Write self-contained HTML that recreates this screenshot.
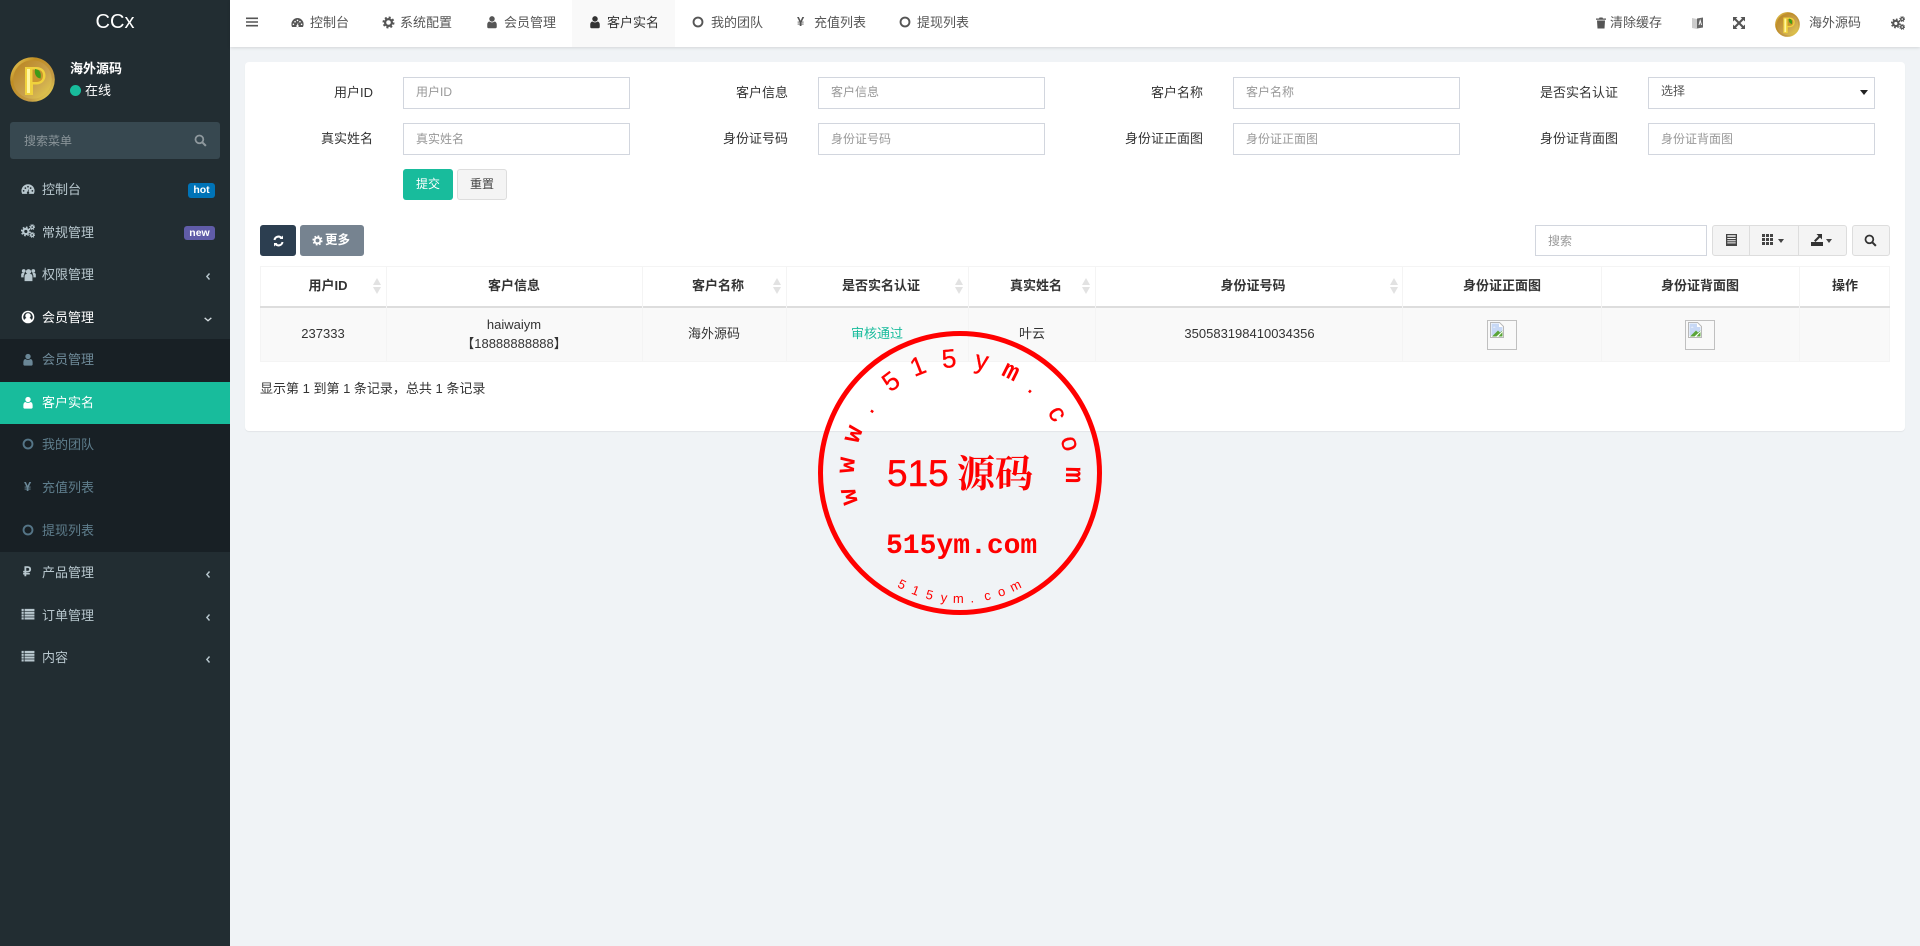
<!DOCTYPE html>
<html lang="zh-CN"><head><meta charset="utf-8"><title>客户实名</title>
<style>
*{box-sizing:border-box}
html,body{margin:0;padding:0;width:1920px;height:946px;overflow:hidden;background:#f0f3f6;font-family:"Liberation Sans","Noto Sans CJK SC",sans-serif;font-size:13px;color:#333}
.t{position:absolute;white-space:nowrap;line-height:20px;height:20px}
.c{transform:translateX(-50%)}
.r{transform:translateX(-100%)}
.b{position:absolute}
svg.i{position:absolute;overflow:visible;fill:currentColor}
#side{position:absolute;left:0;top:0;width:230px;height:946px;background:#222d32;color:#b8c7ce}
#side .t{margin-top:1px}
#nav{position:absolute;left:230px;top:0;width:1690px;height:47px;background:#fff;box-shadow:0 1px 3px rgba(0,0,0,.12);color:#555}
#navt .t{margin-top:1px}
#formt .t{margin-top:1px}
#panel{position:absolute;left:245px;top:62px;width:1660px;height:369px;background:#fff;border-radius:4px;box-shadow:0 1px 1px rgba(0,0,0,.06)}
.in{position:absolute;width:227px;height:32px;border:1px solid #d2d6de;background:#fff}
.ph{position:absolute;white-space:nowrap;line-height:20px;font-size:12px;color:#999}
.sort{position:absolute;width:8px;height:18px}
.line{position:absolute;background:#f4f4f4}
</style></head><body>
<svg width="0" height="0" style="position:absolute"><defs>
<linearGradient id="g1" x1="0" y1="0" x2="1" y2="1"><stop offset="0" stop-color="#f2dc6a"/><stop offset=".3" stop-color="#c08d22"/><stop offset=".7" stop-color="#c39a45"/><stop offset="1" stop-color="#f9ee55"/></linearGradient>
<linearGradient id="g2" x1="0" y1="0" x2="1" y2="1"><stop offset="0" stop-color="#b8821c"/><stop offset=".6" stop-color="#c9a24f"/><stop offset="1" stop-color="#e8d24a"/></linearGradient>
<symbol id="coin" viewBox="0 0 45 45"><circle cx="22.500" cy="22.500" r="22.300" fill="url(#g1)"/><circle cx="22.500" cy="22.500" r="19.300" fill="url(#g2)"/><path d="M15 10h11c6 0 9.500 3.500 9.500 8.500S32 27.500 26 27.500h-3V38h-8z" fill="#f0d23d"/><path d="M17 12h3v24h-3z" fill="#fff6a0"/><path d="M22.500 12.500h4c4 0 6.500 2 6.500 6s-2.500 6.500-6.500 6.500h-4z" fill="#c9962f"/><path d="M25 12c5 .5 6.500 4 5.500 9.500-4-.5-6.500-4-5.500-9.500z" fill="#3f9a17"/></symbol>
<symbol id="dash" viewBox="0 0 16 16"><path fill-rule="evenodd" d="M8 2.500A7.500 7.500 0 0 0 .5 10c0 1.300.3 2.500.9 3.500h13.200c.6-1 .9-2.200.9-3.500A7.500 7.500 0 0 0 8 2.500zM3 9.200a1 1 0 1 1 0 2 1 1 0 0 1 0-2zm2-3.200a1 1 0 1 1 0 2 1 1 0 0 1 0-2zM8 4.400a1 1 0 1 1 0 2 1 1 0 0 1 0-2zm3 1.600a1 1 0 1 1 0 2 1 1 0 0 1 0-2zm2 3.200a1 1 0 1 1 0 2 1 1 0 0 1 0-2zM9 7.500l-.3 3.600a1.400 1.400 0 1 1-1.300 0z"/></symbol>
<symbol id="gear" viewBox="0 0 16 16"><circle cx="8" cy="8" r="4.200" fill="none" stroke="currentColor" stroke-width="2.800"/><circle cx="8" cy="8" r="6.300" fill="none" stroke="currentColor" stroke-width="2.200" stroke-dasharray="2.500 2.450"/></symbol>
<symbol id="cogs" viewBox="0 0 16 16"><circle cx="5.500" cy="8.500" r="3" fill="none" stroke="currentColor" stroke-width="2.400"/><circle cx="5.500" cy="8.500" r="4.800" fill="none" stroke="currentColor" stroke-width="1.800" stroke-dasharray="1.900 1.870"/><circle cx="12.800" cy="3.500" r="1.700" fill="none" stroke="currentColor" stroke-width="1.600"/><circle cx="12.800" cy="3.500" r="2.900" fill="none" stroke="currentColor" stroke-width="1" stroke-dasharray="1.100 1.180"/><circle cx="12.800" cy="12.500" r="1.700" fill="none" stroke="currentColor" stroke-width="1.600"/><circle cx="12.800" cy="12.500" r="2.900" fill="none" stroke="currentColor" stroke-width="1" stroke-dasharray="1.100 1.180"/></symbol>
<symbol id="users" viewBox="0 0 16 16"><circle cx="8" cy="5" r="2.800"/><circle cx="2.900" cy="4.300" r="2"/><circle cx="13.100" cy="4.300" r="2"/><path d="M3.800 15V10c0-1.500 1-2.500 2.200-2.500h4c1.200 0 2.200 1 2.200 2.500v5zM.2 11V8c0-1 .7-1.600 1.500-1.600h1.800l.2 1.200c-.6.500-.9 1.300-.9 2.100V11zM15.800 11V8c0-1-.7-1.600-1.500-1.600h-1.800l-.2 1.200c.6.500.9 1.300.9 2.100V11z"/></symbol>
<symbol id="user" viewBox="0 0 12 16"><circle cx="6" cy="4.300" r="3.300"/><path d="M.3 14v-2.800c0-2.200 1.200-3.600 2.600-3.800.8.700 1.900 1.100 3.100 1.100s2.300-.4 3.100-1.100c1.400.2 2.600 1.600 2.600 3.800V14c0 .9-.7 1.500-1.500 1.500H1.800C1 15.500.3 14.900.3 14z"/></symbol>
<symbol id="ucirc" viewBox="0 0 16 16"><path fill-rule="evenodd" d="M8 .8a7.200 7.200 0 1 0 0 14.400A7.200 7.200 0 0 0 8 .8zm0 1.800a5.400 5.400 0 0 1 4.200 8.800C11.600 10 10.700 9.400 9.800 9.200a3.100 3.100 0 1 0-3.600 0C5.300 9.400 4.400 10 3.800 11.400A5.400 5.400 0 0 1 8 2.600z"/></symbol>
<symbol id="ring" viewBox="0 0 14 14"><circle cx="7" cy="7" r="5.200" fill="none" stroke="currentColor" stroke-width="2.200"/></symbol>
<symbol id="list" viewBox="0 0 16 14"><path d="M.5 1h2.500v2.500H.5zM4 1h11.500v2.500H4zM.5 4.300h2.500v2.500H.5zM4 4.300h11.500v2.500H4zM.5 7.600h2.500v2.500H.5zM4 7.600h11.500v2.500H4zM.5 10.900h2.500v2.500H.5zM4 10.900h11.500v2.500H4z"/></symbol>
<symbol id="lt" viewBox="0 0 8 12"><path d="M6 2L2.500 6 6 10" fill="none" stroke="currentColor" stroke-width="1.900"/></symbol>
<symbol id="dn" viewBox="0 0 12 8"><path d="M2 2l4 3.500L10 2" fill="none" stroke="currentColor" stroke-width="1.600"/></symbol>
<symbol id="srch" viewBox="0 0 14 14"><circle cx="5.800" cy="5.800" r="4.200" fill="none" stroke="currentColor" stroke-width="1.900"/><path d="M8.800 8.800l4 4" stroke="currentColor" stroke-width="2.200" fill="none"/></symbol>
<symbol id="broken" viewBox="0 0 16 16"><path d="M1.500.5h9l4 4v11h-13z" fill="#fff" stroke="#b9b9b9" stroke-width="1"/><path d="M2.500 1.500h7.500v3.500h3.500v5l-11 4z" fill="#c7d8f5"/><path d="M3 14.500L9 8.500l2 2 2.500-2v6z" fill="#5aa538"/><path d="M7 15l7-6.500v1L9 15z" fill="#fff"/><path d="M4 5.500c.5-1 2-1 2.500 0h-2.500z" fill="#fff"/></symbol>
</defs></svg>

<div id="side">
<div class="t c" style="left:115px;top:11px;font-size:20px;color:#fff">CCx</div>
<svg class="b" style="left:10px;top:57px" width="45" height="45"><use href="#coin"/></svg>
<div class="t" style="left:70px;top:58px;font-weight:700;color:#fff">海外源码</div>
<div class="b" style="left:70px;top:84.500px;width:11px;height:11px;border-radius:50%;background:#18bc9c"></div>
<div class="t" style="left:85px;top:80px;color:#fff">在线</div>
<div class="b" style="left:10px;top:122px;width:210px;height:37px;background:#374850;border-radius:3px"></div>
<div class="t" style="left:24px;top:130px;font-size:12px;color:#8a9499">搜索菜单</div>
<svg class="i" style="left:194px;top:134px;color:#8e989d" width="13" height="13"><use href="#srch"/></svg>

<svg class="i" style="left:21px;top:182px" width="14" height="14"><use href="#dash"/></svg><div class="t" style="left:42px;top:179px">控制台</div>
<div class="b" style="left:188px;top:183px;width:27px;height:15px;background:#0073b7;border-radius:3px;color:#fff;font-weight:700;font-size:10.500px;line-height:14px;text-align:center">hot</div>
<svg class="i" style="left:21px;top:224px" width="14" height="14"><use href="#cogs"/></svg><div class="t" style="left:42px;top:222px">常规管理</div>
<div class="b" style="left:184px;top:226px;width:31px;height:14px;background:#605ca8;border-radius:3px;color:#fff;font-weight:700;font-size:10.500px;line-height:14px;text-align:center">new</div>
<svg class="i" style="left:20.500px;top:267px" width="15" height="15"><use href="#users"/></svg><div class="t" style="left:42px;top:264px">权限管理</div>
<svg class="i" style="left:205px;top:271.500px" width="6" height="9"><use href="#lt"/></svg>
<svg class="i" style="left:21px;top:310px;color:#fff" width="14" height="14"><use href="#ucirc"/></svg><div class="t" style="left:42px;top:307px;color:#fff">会员管理</div>
<svg class="i" style="left:203px;top:315.500px;color:#d5dde1" width="10" height="7"><use href="#dn"/></svg>

<div class="b" style="left:0;top:339px;width:230px;height:213px;background:#182025"></div>
<div class="b" style="left:0;top:382px;width:230px;height:42px;background:#18bc9c"></div>
<svg class="i" style="left:23px;top:353px;color:#6a8797" width="10" height="13"><use href="#user"/></svg><div class="t" style="left:42px;top:349px;color:#6f8b9a">会员管理</div>
<svg class="i" style="left:23px;top:395.500px;color:#fff" width="10" height="13"><use href="#user"/></svg><div class="t" style="left:42px;top:392px;color:#fff">客户实名</div>
<svg class="i" style="left:22px;top:438px;color:#557587" width="12" height="12"><use href="#ring"/></svg><div class="t" style="left:42px;top:434px;color:#5f7e8d">我的团队</div>
<div class="t" style="left:24px;top:476px;color:#6a8797;font-weight:700">¥</div><div class="t" style="left:42px;top:477px;color:#5f7e8d">充值列表</div>
<svg class="i" style="left:22px;top:524px;color:#557587" width="12" height="12"><use href="#ring"/></svg><div class="t" style="left:42px;top:520px;color:#5f7e8d">提现列表</div>

<div class="t" style="left:23px;top:561px;font-weight:700">₽</div><div class="t" style="left:42px;top:562px">产品管理</div>
<svg class="i" style="left:205px;top:569.500px" width="6" height="9"><use href="#lt"/></svg>
<svg class="i" style="left:21px;top:608px" width="14" height="12"><use href="#list"/></svg><div class="t" style="left:42px;top:605px">订单管理</div>
<svg class="i" style="left:205px;top:612.500px" width="6" height="9"><use href="#lt"/></svg>
<svg class="i" style="left:21px;top:650px" width="14" height="12"><use href="#list"/></svg><div class="t" style="left:42px;top:647px">内容</div>
<svg class="i" style="left:205px;top:654.500px" width="6" height="9"><use href="#lt"/></svg>
</div>

<div id="nav"></div>
<div class="b" style="left:572px;top:0;width:103px;height:47px;background:#f9f9f9"></div>
<div id="navt" style="color:#555">
<svg class="i" style="left:246px;top:16px;color:#555" width="12" height="12" viewBox="0 0 12 12"><path d="M0 1.500h12v1.600H0zM0 5.200h12v1.600H0zM0 8.900h12v1.600H0z"/></svg>
<svg class="i" style="left:291px;top:16px;color:#555" width="13" height="13"><use href="#dash"/></svg><div class="t" style="left:310px;top:12px">控制台</div>
<svg class="i" style="left:382px;top:16px;color:#555" width="13" height="13"><use href="#gear"/></svg><div class="t" style="left:400px;top:12px">系统配置</div>
<svg class="i" style="left:487px;top:15px;color:#555" width="10" height="14"><use href="#user"/></svg><div class="t" style="left:504px;top:12px">会员管理</div>
<svg class="i" style="left:590px;top:15px;color:#333" width="10" height="14"><use href="#user"/></svg><div class="t" style="left:607px;top:12px;color:#333">客户实名</div>
<svg class="i" style="left:692px;top:16px;color:#555" width="12" height="12"><use href="#ring"/></svg><div class="t" style="left:711px;top:12px">我的团队</div>
<div class="t" style="left:797px;top:11px;font-weight:700">¥</div><div class="t" style="left:814px;top:12px">充值列表</div>
<svg class="i" style="left:899px;top:16px;color:#555" width="12" height="12"><use href="#ring"/></svg><div class="t" style="left:917px;top:12px">提现列表</div>

<svg class="i" style="left:1596px;top:17px;color:#555" width="10" height="12" viewBox="0 0 10 12"><path d="M3.500.5h3l.5 1h3v1.200H0V1.500h3zM1 3.500h8l-.5 8h-7z"/></svg><div class="t" style="left:1610px;top:12px">清除缓存</div>
<svg class="i" style="left:1691px;top:16px" width="13" height="14" viewBox="0 0 13 14"><path d="M1 2l5 1v10l-5-1z" fill="#ccc"/><path d="M6 2.500l6-1v10l-6 1z" fill="#666"/><path d="M8 9l1.200-4.500L10.500 9" fill="none" stroke="#fff" stroke-width=".9"/></svg>
<svg class="i" style="left:1733px;top:17px;color:#555" width="12" height="12" viewBox="0 0 12 12"><path d="M0 0h4.500L3 1.500 6 4.500 9 1.500 7.500 0H12v4.500L10.500 3 7.500 6l3 3L12 7.500V12H7.500L9 10.500 6 7.500 3 10.500 4.500 12H0V7.500L1.500 9l3-3-3-3L0 4.500z"/></svg>
<svg class="b" style="left:1775px;top:12px" width="25" height="25"><use href="#coin"/></svg>
<div class="t" style="left:1809px;top:12px">海外源码</div>
<svg class="i" style="left:1891px;top:16px;color:#555" width="14" height="14"><use href="#cogs"/></svg>
</div>

<div id="panel"></div>
<!-- search form -->
<div id="formt">
<div class="t r" style="left:373px;top:82px">用户ID</div><div class="in" style="left:403px;top:77px"></div><div class="ph" style="left:416px;top:82px">用户ID</div>
<div class="t r" style="left:788px;top:82px">客户信息</div><div class="in" style="left:818px;top:77px"></div><div class="ph" style="left:831px;top:82px">客户信息</div>
<div class="t r" style="left:1203px;top:82px">客户名称</div><div class="in" style="left:1233px;top:77px"></div><div class="ph" style="left:1246px;top:82px">客户名称</div>
<div class="t r" style="left:1618px;top:82px">是否实名认证</div><div class="in" style="left:1648px;top:77px"></div><div class="ph" style="left:1661px;top:81px;color:#555">选择</div>
<div class="b" style="left:1860px;top:90px;border:4px solid transparent;border-top:5px solid #222;border-bottom:0"></div>
<div class="t r" style="left:373px;top:128px">真实姓名</div><div class="in" style="left:403px;top:123px"></div><div class="ph" style="left:416px;top:129px">真实姓名</div>
<div class="t r" style="left:788px;top:128px">身份证号码</div><div class="in" style="left:818px;top:123px"></div><div class="ph" style="left:831px;top:129px">身份证号码</div>
<div class="t r" style="left:1203px;top:128px">身份证正面图</div><div class="in" style="left:1233px;top:123px"></div><div class="ph" style="left:1246px;top:129px">身份证正面图</div>
<div class="t r" style="left:1618px;top:128px">身份证背面图</div><div class="in" style="left:1648px;top:123px"></div><div class="ph" style="left:1661px;top:129px">身份证背面图</div>
<div class="b" style="left:403px;top:169px;width:50px;height:31px;background:#18bc9c;border-radius:3px;color:#fff;font-size:12px;line-height:31px;text-align:center">提交</div>
<div class="b" style="left:457px;top:169px;width:50px;height:31px;background:#f4f4f4;border:1px solid #ddd;border-radius:3px;color:#444;font-size:12px;line-height:29px;text-align:center">重置</div>
</div>

<!-- toolbar -->
<div class="b" style="left:260px;top:225px;width:36px;height:31px;background:#2c3e50;border-radius:3px"></div>
<svg class="i" style="left:272.500px;top:234.500px" width="11" height="12" viewBox="0 0 11 12"><path d="M1.500 5a4 4 0 0 1 7-2M9.500 7a4 4 0 0 1-7 2" fill="none" stroke="#fff" stroke-width="2"/><path d="M10 .5v3.500H6.500zM1 11.500V8h3.500z" fill="#fff"/></svg>
<div class="b" style="left:300px;top:225px;width:64px;height:31px;background:#768390;border-radius:3px"></div>
<svg class="i" style="left:312px;top:235px;color:#fff" width="11" height="11"><use href="#gear"/></svg>
<div class="t" style="left:325px;top:230px;color:#fff;font-size:12.500px;font-weight:700">更多</div>
<div class="in" style="left:1535px;top:225px;width:172px;height:31px;border-color:#d2d6de"></div><div class="ph" style="left:1548px;top:231px">搜索</div>
<div class="b" style="left:1712px;top:225px;width:135px;height:31px;background:#f4f4f4;border:1px solid #ddd;border-radius:3px"></div>
<div class="b" style="left:1749px;top:226px;width:1px;height:29px;background:#ddd"></div>
<div class="b" style="left:1798px;top:226px;width:1px;height:29px;background:#ddd"></div>
<div class="b" style="left:1852px;top:225px;width:38px;height:31px;background:#f4f4f4;border:1px solid #ddd;border-radius:3px"></div>
<svg class="i" style="left:1726px;top:234px;color:#444" width="11" height="12" viewBox="0 0 11 12"><path fill-rule="evenodd" d="M0 0h11v12H0zM1.300 1.300v1.400h8.400V1.300zm0 2.700v1h8.400V4zm0 2.200v1h8.400v-1zm0 2.200v1h8.400v-1z"/></svg>
<svg class="i" style="left:1762px;top:234px;color:#444" width="11" height="11" viewBox="0 0 11 11"><path d="M0 0h3v3H0zM4 0h3v3H4zM8 0h3v3H8zM0 4h3v3H0zM4 4h3v3H4zM8 4h3v3H8zM0 8h3v3H0zM4 8h3v3H4zM8 8h3v3H8z"/></svg>
<div class="b" style="left:1778px;top:239px;border:3.500px solid transparent;border-top:4px solid #444;border-bottom:0"></div>
<svg class="i" style="left:1811px;top:233px;color:#333" width="12" height="13" viewBox="0 0 12 13"><path d="M0 9h12v4H0z"/><path d="M3 7.500L7.500 3 5.500 1H11v5.500L9 4.500 4.500 9z"/></svg>
<div class="b" style="left:1826px;top:239px;border:3.500px solid transparent;border-top:4px solid #444;border-bottom:0"></div>
<svg class="i" style="left:1864px;top:234px;color:#333" width="13" height="13"><use href="#srch"/></svg>

<!-- table -->
<div class="b" style="left:260px;top:266px;width:1630px;height:96px;border:1px solid #f4f4f4"></div>
<div class="b" style="left:261px;top:307px;width:1628px;height:54px;background:#f9f9f9"></div>
<div class="b" style="left:260px;top:306px;width:1630px;height:2px;background:#ddd"></div>
<div class="line" style="left:386px;top:266px;width:1px;height:96px"></div>
<div class="line" style="left:642px;top:266px;width:1px;height:96px"></div>
<div class="line" style="left:786px;top:266px;width:1px;height:96px"></div>
<div class="line" style="left:968px;top:266px;width:1px;height:96px"></div>
<div class="line" style="left:1095px;top:266px;width:1px;height:96px"></div>
<div class="line" style="left:1402px;top:266px;width:1px;height:96px"></div>
<div class="line" style="left:1601px;top:266px;width:1px;height:96px"></div>
<div class="line" style="left:1799px;top:266px;width:1px;height:96px"></div>

<div class="t c" style="left:328px;top:276px;font-weight:700">用户ID</div>
<div class="t c" style="left:514px;top:276px;font-weight:700">客户信息</div>
<div class="t c" style="left:718px;top:276px;font-weight:700">客户名称</div>
<div class="t c" style="left:881px;top:276px;font-weight:700">是否实名认证</div>
<div class="t c" style="left:1036px;top:276px;font-weight:700">真实姓名</div>
<div class="t c" style="left:1253px;top:276px;font-weight:700">身份证号码</div>
<div class="t c" style="left:1502px;top:276px;font-weight:700">身份证正面图</div>
<div class="t c" style="left:1700px;top:276px;font-weight:700">身份证背面图</div>
<div class="t c" style="left:1845px;top:276px;font-weight:700">操作</div>
<svg class="sort" style="left:373px;top:277px" viewBox="0 0 8 18"><path d="M4 1l4 7H0z" fill="#e2e2e2"/><path d="M4 17l4-7H0z" fill="#e2e2e2"/></svg>
<svg class="sort" style="left:773px;top:277px" viewBox="0 0 8 18"><path d="M4 1l4 7H0z" fill="#e2e2e2"/><path d="M4 17l4-7H0z" fill="#e2e2e2"/></svg>
<svg class="sort" style="left:955px;top:277px" viewBox="0 0 8 18"><path d="M4 1l4 7H0z" fill="#e2e2e2"/><path d="M4 17l4-7H0z" fill="#e2e2e2"/></svg>
<svg class="sort" style="left:1082px;top:277px" viewBox="0 0 8 18"><path d="M4 1l4 7H0z" fill="#e2e2e2"/><path d="M4 17l4-7H0z" fill="#e2e2e2"/></svg>
<svg class="sort" style="left:1390px;top:277px" viewBox="0 0 8 18"><path d="M4 1l4 7H0z" fill="#e2e2e2"/><path d="M4 17l4-7H0z" fill="#e2e2e2"/></svg>

<div class="t c" style="left:323px;top:324px">237333</div>
<div class="t c" style="left:514px;top:315px">haiwaiym</div>
<div class="t c" style="left:514px;top:334px">【18888888888】</div>
<div class="t c" style="left:714px;top:324px">海外源码</div>
<div class="t c" style="left:877px;top:324px;color:#18bc9c">审核通过</div>
<div class="t c" style="left:1032px;top:324px">叶云</div>
<div class="t c" style="left:1249.500px;top:324px">350583198410034356</div>
<div class="b" style="left:1487px;top:320px;width:30px;height:30px;border:1px solid #c0c0c0"></div>
<svg class="b" style="left:1489px;top:322px" width="16" height="16"><use href="#broken"/></svg>
<div class="b" style="left:1685px;top:320px;width:30px;height:30px;border:1px solid #c0c0c0"></div>
<svg class="b" style="left:1687px;top:322px" width="16" height="16"><use href="#broken"/></svg>
<div class="t" style="left:260px;top:379px">显示第 1 到第 1 条记录，总共 1 条记录</div>

<!-- stamp -->
<svg class="b" style="left:0;top:0;pointer-events:none" width="1920" height="946" viewBox="0 0 1920 946" fill="#f00" font-family="Liberation Sans, Noto Sans CJK SC, sans-serif">
<circle cx="960" cy="473" r="139.500" fill="none" stroke="#f00" stroke-width="5"/>
<g font-size="26" text-anchor="middle">
<g font-family="Liberation Mono, monospace" font-weight="700" font-size="27">
<text x="960" y="367" transform="rotate(-102 960 473)">w</text>
<text x="960" y="367" transform="rotate(-86 960 473)">w</text>
<text x="960" y="367" transform="rotate(-70 960 473)">w</text>
<text x="960" y="367" transform="rotate(91 960 473)">m</text>
</g>
<text x="960" y="367" transform="rotate(-55 960 473)">.</text>
<text x="960" y="367" transform="rotate(-37 960 473)" stroke="#f00" stroke-width=".3">5</text>
<text x="960" y="367" transform="rotate(-21.500 960 473)" stroke="#f00" stroke-width=".3">1</text>
<text x="960" y="367" transform="rotate(-5.500 960 473)" stroke="#f00" stroke-width=".3">5</text>
<text x="960" y="367" transform="rotate(11 960 473)" stroke="#f00" stroke-width=".3">y</text>
<text x="960" y="367" transform="rotate(26.700 960 473)" font-family="Liberation Mono, monospace" font-weight="700">m</text>
<text x="960" y="367" transform="rotate(40.600 960 473)">.</text>
<text x="960" y="367" transform="rotate(58.600 960 473)" stroke="#f00" stroke-width=".3">c</text>
<text x="960" y="367" transform="rotate(75 960 473)" stroke="#f00" stroke-width=".3">o</text>
</g>
<text x="887" y="486" font-size="37" stroke="#f00" stroke-width=".4">515</text>
<text x="957" y="487" font-size="38" font-weight="700" font-family="Noto Serif CJK SC, serif">源码</text>
<text x="886" y="553" font-size="28" font-weight="700" font-family="Liberation Mono, monospace">515ym.com</text>
<g font-size="13" text-anchor="middle">
<text x="960" y="603" transform="rotate(27.500 960 473)">5</text>
<text x="960" y="603" transform="rotate(20.700 960 473)">1</text>
<text x="960" y="603" transform="rotate(14 960 473)">5</text>
<text x="960" y="603" transform="rotate(7.300 960 473)">y</text>
<text x="960" y="603" transform="rotate(.75 960 473)">m</text>
<text x="960" y="603" transform="rotate(-5.500 960 473)">.</text>
<text x="960" y="603" transform="rotate(-12.600 960 473)">c</text>
<text x="960" y="603" transform="rotate(-19.200 960 473)">o</text>
<text x="960" y="603" transform="rotate(-26.200 960 473)">m</text>
</g>
</svg>
</body></html>
